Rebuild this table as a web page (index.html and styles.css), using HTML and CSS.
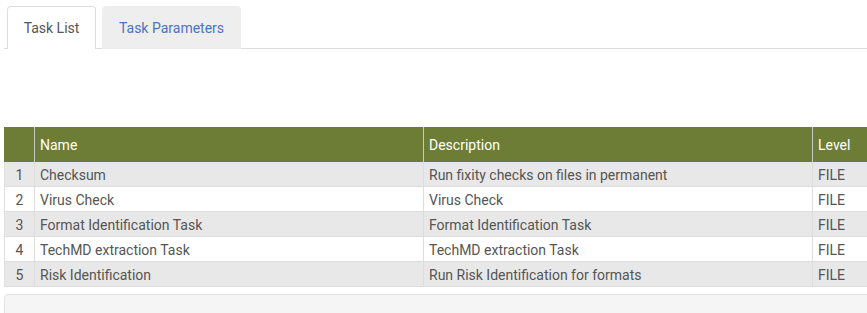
FILE: index.html
```html
<!DOCTYPE html>
<html>
<head>
<meta charset="utf-8">
<link rel="stylesheet" href="styles.css">
</head>
<body>
<div class="page">
  <ul class="tabs">
    <li class="tab active">Task List</li>
    <li class="tab">Task Parameters</li>
  </ul>
  <div class="spacer"></div>
  <table class="tasks">
    <colgroup>
      <col class="c-num"><col class="c-name"><col class="c-desc"><col class="c-level">
    </colgroup>
    <thead>
      <tr><th></th><th>Name</th><th>Description</th><th>Level</th></tr>
    </thead>
    <tbody>
      <tr><td class="num">1</td><td>Checksum</td><td>Run fixity checks on files in permanent</td><td>FILE</td></tr>
      <tr><td class="num">2</td><td>Virus Check</td><td>Virus Check</td><td>FILE</td></tr>
      <tr><td class="num">3</td><td>Format Identification Task</td><td>Format Identification Task</td><td>FILE</td></tr>
      <tr><td class="num">4</td><td>TechMD extraction Task</td><td>TechMD extraction Task</td><td>FILE</td></tr>
      <tr><td class="num">5</td><td>Risk Identification</td><td>Run Risk Identification for formats</td><td>FILE</td></tr>
    </tbody>
  </table>
  <div class="well"></div>
</div>
</body>
</html>
```
FILE: styles.css
```css
html, body {
  margin: 0;
  padding: 0;
  background: #fff;
  overflow: hidden;
}
.page {
  width: 1100px;
  padding: 6px 0 0 4px;
  font-family: Roboto, "Liberation Sans", sans-serif;
  font-size: 14px;
  color: #555;
}
.tabs {
  list-style: none;
  margin: 0;
  padding: 0 0 0 3px;
  display: flex;
  gap: 6px;
  border-bottom: 1px solid #ddd;
}
.tab {
  height: 43px;
  box-sizing: border-box;
  line-height: 42px;
  border: 1px solid transparent;
  border-bottom: none;
  border-radius: 4px 4px 0 0;
  background: #eee;
  color: #4a73c4;
  margin-bottom: -1px;
  text-align: center;
  padding: 0;
  width: 139px;
}
.tab.active {
  background: #fff;
  color: #555;
  border-color: #ddd;
  width: 89px;
}
.spacer {
  height: 78px;
}
.tasks {
  border-collapse: separate;
  border-spacing: 0;
  table-layout: fixed;
  width: 1000px;
}
.c-num { width: 30px; }
.c-name { width: 389px; }
.c-desc { width: 389px; }
.c-level { width: 192px; }
.tasks th {
  background: #6e7d35;
  color: #fff;
  font-weight: normal;
  text-align: left;
  height: 35px;
  box-sizing: border-box;
  padding: 0 5px;
  border-left: 1px solid #c8c8c8;
}
.tasks th:first-child { border-left: none; }
.tasks td {
  padding: 3px 5px 0;
  border-left: 1px solid #ddd;
  border-bottom: 1px solid #ddd;
  line-height: 21px;
}
.tasks td:first-child { border-left-color: #e0e0e0; }
.tasks td.num {
  text-align: center;
  padding: 3px 0 0;
}
.tasks tbody tr:nth-child(odd) td { background: #e8e8e8; }
.tasks tbody tr:nth-child(even) td { background: #fff; }
.well {
  margin-top: 7px;
  height: 40px;
  background: #f5f5f5;
  border: 1px solid #e3e3e3;
  border-radius: 4px;
}
```
